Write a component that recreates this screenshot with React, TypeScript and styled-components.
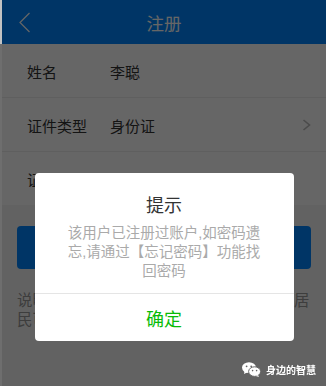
import styled, {createGlobalStyle} from 'styled-components'

const GlobalStyle = createGlobalStyle`
  html, body {
    margin: 0;
    padding: 0;
  }
  body {
    font-family: "Liberation Sans", "Noto Sans CJK SC", sans-serif;
    background: linear-gradient(to bottom, #c2c2c2 0, #c2c2c2 44px, #6e6e6e 44px);
    overflow: hidden;
  }
`

const Page = styled.div`
  margin-left: 2px;
  min-height: 386px;
  background: #f5f5f5;
`

const Header = styled.header`
  display: grid;
  grid-template-columns: 60px 1fr 60px;
  align-items: center;
  height: 44px;
  background: #0086ff;
`

const BackIcon = styled.svg`
  display: block;
  margin-left: 17px;
`

const Title = styled.h1`
  margin: 0;
  text-align: center;
  font-size: 17.5px;
  font-weight: 400;
  color: #fff;
`

const Form = styled.section`
  background: #fff;
`

const Row = styled.div<{$last?: boolean}>`
  display: flex;
  align-items: center;
  height: 52px;
  padding: 1px 15px 0 25px;
  border-bottom: ${({$last}) => ($last ? 'none' : '1px solid #eee')};
  font-size: 15px;
  color: #333;
`

const Label = styled.span`
  width: 83px;
  flex-shrink: 0;
`

const Value = styled.span`
  flex: 1;
  white-space: nowrap;
`

const Chevron = styled.svg`
  display: block;
  flex-shrink: 0;
`

const SubmitButton = styled.button`
  display: block;
  width: calc(100% - 30px);
  height: 43px;
  margin: 21px 15px 0;
  border: none;
  border-radius: 4px;
  background: #0086ff;
  color: #fff;
  font-family: inherit;
  font-size: 17px;
`

const Note = styled.p`
  margin: 22px 0 0;
  padding: 0 14px 0 15px;
  font-size: 15.4px;
  line-height: 19px;
  color: #999;
`

const Mask = styled.div`
  position: fixed;
  top: 0;
  right: 0;
  bottom: 0;
  left: 2px;
  display: flex;
  justify-content: center;
  align-items: flex-start;
  padding-top: 173px;
  background: rgba(0, 0, 0, 0.6);
`

const Dialog = styled.div`
  width: 259px;
  background: #fff;
  border-radius: 4px;
  text-align: center;
`

const DialogTitle = styled.h2`
  margin: 0;
  padding-top: 21px;
  font-size: 18px;
  line-height: 24px;
  font-weight: 400;
  color: #333;
`

const DialogMessage = styled.p`
  margin: 6px 0 0;
  padding: 0 16px 12px;
  font-size: 14.5px;
  line-height: 19px;
  color: #aaa;
`

const DialogFooter = styled.div`
  display: flex;
  align-items: center;
  justify-content: center;
  height: 47px;
  border-top: 1px solid #e5e5e5;
  font-size: 18px;
  color: #09bb07;
`

const Watermark = styled.div`
  position: fixed;
  right: 10px;
  bottom: 9px;
  display: flex;
  align-items: center;
  gap: 5px;
  font-size: 10px;
  font-weight: 700;
  color: #fff;
`

const WeChatIcon = () => (
  <svg width="19" height="15" viewBox="0 0 19 15">
    <ellipse cx="7" cy="5.6" rx="7" ry="5.4" fill="#fff" />
    <path d="M2.5 9 L2 12 L5.5 10.2 Z" fill="#fff" />
    <circle cx="4.6" cy="4.3" r="0.9" fill="#666" />
    <circle cx="9.2" cy="4.3" r="0.9" fill="#666" />
    <ellipse cx="12.6" cy="9.6" rx="6" ry="4.8" fill="#fff" stroke="#666" strokeWidth="1" />
    <path d="M16 13 L17 15 L13.8 14 Z" fill="#fff" />
    <circle cx="10.6" cy="8.6" r="0.8" fill="#666" />
    <circle cx="14.6" cy="8.6" r="0.8" fill="#666" />
  </svg>
)

export default function App() {
  return (
    <>
      <GlobalStyle />
      <Page>
        <Header>
          <BackIcon width="12" height="21" viewBox="0 0 12 21">
            <polyline points="10.5,1 1,10.5 10.5,20" fill="none" stroke="#fff" strokeWidth="1.2" />
          </BackIcon>
          <Title>注册</Title>
          <span />
        </Header>
        <Form>
          <Row>
            <Label>姓名</Label>
            <Value>李聪</Value>
          </Row>
          <Row>
            <Label>证件类型</Label>
            <Value>身份证</Value>
            <Chevron width="9" height="12" viewBox="0 0 9 12">
              <polyline points="1.5,1 7.5,6 1.5,11" fill="none" stroke="#bbb" strokeWidth="1.6" />
            </Chevron>
          </Row>
          <Row $last>
            <Label>证件号码</Label>
            <Value>430102199001011234</Value>
          </Row>
        </Form>
        <SubmitButton>下一步</SubmitButton>
        <Note>说明：本市户籍居民及持有本市居住证的居民可使用身份证号码进行注册。</Note>
      </Page>
      <Mask>
        <Dialog>
          <DialogTitle>提示</DialogTitle>
          <DialogMessage>
            该用户已注册过账户,如密码遗
            <br />
            忘,请通过【忘记密码】功能找
            <br />
            回密码
          </DialogMessage>
          <DialogFooter>确定</DialogFooter>
        </Dialog>
      </Mask>
      <Watermark>
        <WeChatIcon />
        身边的智慧
      </Watermark>
    </>
  )
}
